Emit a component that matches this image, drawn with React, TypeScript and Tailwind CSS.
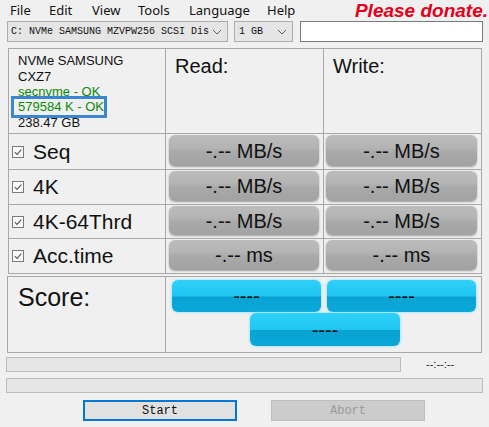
import React from "react";

const arial = { fontFamily: '"Liberation Sans", Arial, sans-serif' } as const;
const mono = { fontFamily: '"Liberation Mono", "DejaVu Sans Mono", monospace' } as const;
const ui = { fontFamily: '"Noto Sans", "Open Sans", sans-serif' } as const;

function Check() {
  return (
    <svg width="12" height="12" viewBox="0 0 12 12" className="shrink-0">
      <rect x="0.5" y="0.5" width="11" height="11" fill="#fbfbfb" stroke="#7a7a7a" />
      <path d="M2.8 6.2 L5 8.4 L9.3 3.6" fill="none" stroke="#555" strokeWidth="1.1" />
    </svg>
  );
}

function Chevron() {
  return (
    <svg width="10" height="6" viewBox="0 0 10 6" className="shrink-0">
      <path d="M1 1 L5 5 L9 1" fill="none" stroke="#606060" strokeWidth="1" />
    </svg>
  );
}

function GrayBtn({ text }: { text: string }) {
  return (
    <div className="h-full w-full rounded-[6px] bg-[linear-gradient(to_bottom,#bcbcbc_0%,#b4b4b4_40%,#a9a9a9_55%,#a2a2a2_100%)] shadow-[0_1px_2px_rgba(0,0,0,0.35)] flex items-center justify-center text-[20px] text-[#111]">
      {text}
    </div>
  );
}

function BlueBtn({ w, h }: { w: string; h: string }) {
  return (
    <div className={`${w} ${h} rounded-[6px] bg-[linear-gradient(to_bottom,#2fd0f8_0%,#1fc6f2_50%,#09a3d2_53%,#0aa8d8_100%)] shadow-[0_0_3px_#6fdcff] flex items-center justify-center text-[20px] text-[#111] leading-none`}>
      ----
    </div>
  );
}

const rows: { label: string; unit: string; h: string }[] = [
  { label: "Seq", unit: "MB/s", h: "h-[35px]" },
  { label: "4K", unit: "MB/s", h: "h-[34px]" },
  { label: "4K-64Thrd", unit: "MB/s", h: "h-[33px]" },
  { label: "Acc.time", unit: "ms", h: "h-[34px]" },
];

export default function App() {
  return (
    <div className="w-[489px] h-[427px] bg-[#f0f0f0] overflow-hidden flex flex-col" style={arial}>
      {/* menu */}
      <div className="h-[21px] flex items-center text-[13px] text-[#111]" style={ui}>
        <span className="pl-[10px] w-[49px]">File</span>
        <span className="w-[43px]">Edit</span>
        <span className="w-[46px]">View</span>
        <span className="w-[51px]">Tools</span>
        <span className="w-[78px]">Language</span>
        <span>Help</span>
        <span className="ml-auto mr-[1px] whitespace-nowrap text-[19px] font-bold italic text-[#e4001b] leading-none" style={arial}>
          Please donate.
        </span>
      </div>
      {/* combo row */}
      <div className="h-[21px] flex pl-[7px] gap-[6px]">
        <div className="w-[221px] h-full border border-[#adadad] bg-[#e5e5e5] flex items-center pl-[3px] pr-[5px] text-[10px] text-[#111]" style={mono}>
          <span className="flex-1 whitespace-nowrap overflow-hidden">C: NVMe SAMSUNG MZVPW256 SCSI Dis</span>
          <Chevron />
        </div>
        <div className="w-[59px] h-full border border-[#adadad] bg-[#e5e5e5] flex items-center pl-[4px] pr-[5px] text-[10px] text-[#111]" style={mono}>
          <span className="flex-1">1 GB</span>
          <Chevron />
        </div>
        <div className="ml-[1px] w-[183px] h-full border border-[#7a7a7a] bg-white" />
      </div>
      {/* table */}
      <div className="mt-[6px] ml-[8px] w-[474px] bg-[#a8a8a8] p-px grid grid-cols-[156px_157px_157px] gap-px">
        <div className="h-[84px] bg-[#f0f0f0] relative pl-[9px] pt-[4px] text-[13px] leading-[15.5px] text-[#111]">
          <div>NVMe SAMSUNG</div>
          <div>CXZ7</div>
          <div className="text-[#0c8a0c]">secnvme - OK</div>
          <div className="text-[#0c8a0c]">579584 K - OK</div>
          <div>238.47 GB</div>
          <div className="absolute left-[2px] top-[47px] w-[96px] h-[22px] border-[3px] border-[#3a87cf] bg-[#f0f0f0] pl-[4px] text-[#0c8a0c] leading-[16px]">
            579584 K - OK
          </div>
        </div>
        <div className="h-[84px] bg-[#f0f0f0] pl-[9px] pt-[2px] text-[20px] text-[#111]">Read:</div>
        <div className="h-[84px] bg-[#f0f0f0] pl-[9px] pt-[2px] text-[20px] text-[#111]">Write:</div>
        {rows.map((r) => (
          <React.Fragment key={r.label}>
            <div className={`${r.h} bg-[#f0f0f0] flex items-center pl-[3px] gap-[9px] text-[21px] text-[#111]`}>
              <Check />
              <span>{r.label}</span>
            </div>
            <div className={`${r.h} bg-[#f0f0f0] pl-[3px] pr-[4px] pt-[1px] pb-[3px]`}>
              <GrayBtn text={`-.-- ${r.unit}`} />
            </div>
            <div className={`${r.h} bg-[#f0f0f0] pl-[2px] pr-[4px] pt-[1px] pb-[3px]`}>
              <GrayBtn text={`-.-- ${r.unit}`} />
            </div>
          </React.Fragment>
        ))}
      </div>
      {/* score */}
      <div className="mt-[2px] ml-[7px] w-[475px] bg-[#a8a8a8] p-px grid grid-cols-[157px_315px] gap-px">
        <div className="h-[75px] bg-[#f0f0f0] pl-[10px] pt-[2px] text-[25px] text-[#111]">Score:</div>
        <div className="h-[75px] bg-[#f0f0f0] flex flex-col">
          <div className="flex gap-[6px] pl-[6px] pt-[3px]">
            <BlueBtn w="w-[149px]" h="h-[32px]" />
            <BlueBtn w="w-[149px]" h="h-[32px]" />
          </div>
          <div className="pl-[84px] pt-[1px]">
            <BlueBtn w="w-[150px]" h="h-[33px]" />
          </div>
        </div>
      </div>
      {/* progress */}
      <div className="mt-[4px] ml-[6px] flex items-center h-[15px]">
        <div className="w-[395px] h-full border border-[#bcbcbc] bg-[#e6e6e6]" />
        <span className="ml-[25px] text-[11px] text-[#222]" style={arial}>--:--:--</span>
      </div>
      <div className="mt-[6px] ml-[6px] w-[477px] h-[15px] border border-[#bcbcbc] bg-[#e6e6e6]" />
      {/* buttons */}
      <div className="mt-[7px] flex h-[21px]">
        <div className="ml-[83px] w-[154px] h-full border-2 border-[#0078d7] bg-[#e1e1e1] flex items-center justify-center text-[12px] text-[#111]" style={mono}>
          Start
        </div>
        <div className="ml-[34px] w-[154px] h-full border border-[#bfbfbf] bg-[#cccccc] flex items-center justify-center text-[12px] text-[#9a9a9a]" style={mono}>
          Abort
        </div>
      </div>
    </div>
  );
}
